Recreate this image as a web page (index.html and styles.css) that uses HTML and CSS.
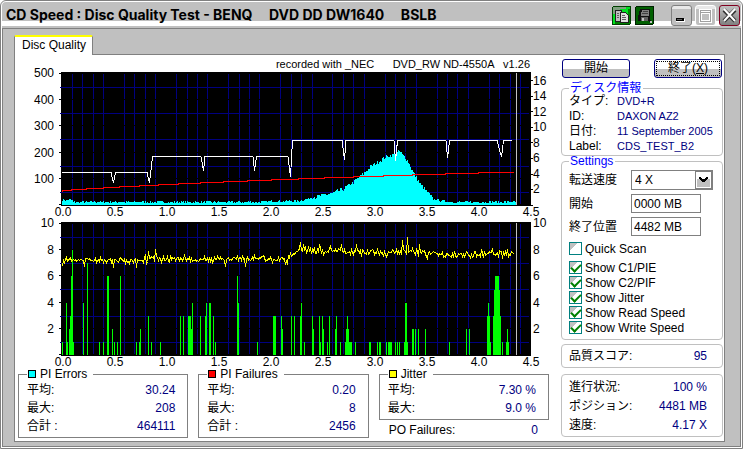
FILE: index.html
```
<!DOCTYPE html>
<html lang="ja">
<head>
    <meta charset="UTF-8">
    <meta name="viewport" content="width=device-width, initial-scale=1.0">
    <title>CD Speed : Disc Quality Test</title>
    <link rel="stylesheet" href="styles.css">
</head>
<body>
    <div class="window">
        <header class="titlebar">
            <h1>CD Speed : Disc Quality Test - BENQ     DVD DD DW1640     BSLB</h1>
            <div class="title-buttons">
                <button type="button" class="tool" aria-label="Copy">
                    <svg viewBox="0 0 19 19" shape-rendering="crispEdges">
                        <rect width="19" height="19" rx="2" fill="#004000"/>
                        <rect x="1" y="1" width="17" height="17" fill="#00e020"/>
                        <path d="M1 1h13v2H8v2H5v3H1z" fill="#80a080"/>
                        <path d="M16 3h2v15H3v-2h13z" fill="#008000"/>
                        <path d="M3 4h6v11H3z" fill="#c0c0c0" stroke="#202020"/>
                        <path d="M8 6h5l3 3v7H8z" fill="#e0e0e0" stroke="#202020"/>
                        <path d="M5 7h2M5 9h2M5 11h2M10 9h3M10 11h4M10 13h4" stroke="#606060"/>
                    </svg>
                </button>
                <button type="button" class="tool" aria-label="Save">
                    <svg viewBox="0 0 19 19" shape-rendering="crispEdges">
                        <rect width="19" height="19" rx="2" fill="#002000"/>
                        <rect x="1" y="1" width="17" height="17" fill="#006000"/>
                        <path d="M5 3h10v11h1v2h-2v-1H3V9h1V5h1z" fill="#101010"/>
                        <path d="M7 4h7v6H6V6h1z" fill="#808080"/>
                        <path d="M8 5h5v1H8zM7 7h6v1H7z" fill="#404040"/>
                        <path d="M6 11h7v4H6z" fill="#606060"/>
                        <path d="M7 12h2v3H7z" fill="#c0c0c0"/>
                        <path d="M15 15h2v2h-2z" fill="#c0c0c0"/>
                    </svg>
                </button>
                <button type="button" class="win min" aria-label="Minimize">
                    <svg viewBox="0 0 19 19" shape-rendering="crispEdges">
                        <path d="M4 12h8v3H4z" fill="#000"/>
                        <path d="M5 13h5v1H5z" fill="#606060"/>
                        <path d="M4 15.5h8.500v-3" fill="none" stroke="#fff"/>
                    </svg>
                </button>
                <button type="button" class="win max" aria-label="Maximize" disabled>
                    <svg viewBox="0 0 19 19" shape-rendering="crispEdges">
                        <path d="M4 4h10v11H4zM4 6h10" fill="none" stroke="#fff" stroke-width="3"/>
                        <path d="M4 4h10v11H4zM4 6h10" fill="none" stroke="#a0a0a0"/>
                    </svg>
                </button>
                <button type="button" class="win close" aria-label="Close">
                    <svg viewBox="0 0 19 19">
                        <path d="M4 4l11 11M15 4L4 15" stroke="#303030" stroke-width="4"/>
                        <path d="M4 3l11 12M15 3L4 15" stroke="#fff" stroke-width="2"/>
                    </svg>
                </button>
            </div>
        </header>

        <main class="content">
            <a class="tab" href="#quality">Disc Quality</a>
            <div class="panel" id="quality">
                <section class="results">
                    <p class="recorded">recorded with _NEC      DVD_RW ND-4550A   v1.26</p>

                    <div class="chart">
                        <div class="axis left"><span>500</span><span>400</span><span>300</span><span>200</span><span>100</span></div>
                        <svg class="plot" id="errorsPlot" viewBox="0 0 470 134" preserveAspectRatio="none"></svg>
                        <div class="axis right speed"><span>16</span><span>14</span><span>12</span><span>10</span><span>8</span><span>6</span><span>4</span><span>2</span></div>
                        <div class="axis bottom"><span>0.0</span><span>0.5</span><span>1.0</span><span>1.5</span><span>2.0</span><span>2.5</span><span>3.0</span><span>3.5</span><span>4.0</span><span>4.5</span></div>
                    </div>

                    <div class="chart">
                        <div class="axis left"><span>10</span><span>8</span><span>6</span><span>4</span><span>2</span></div>
                        <svg class="plot" id="jitterPlot" viewBox="0 0 470 134" preserveAspectRatio="none"></svg>
                        <div class="axis right"><span>10</span><span>8</span><span>6</span><span>4</span><span>2</span></div>
                        <div class="axis bottom"><span>0.0</span><span>0.5</span><span>1.0</span><span>1.5</span><span>2.0</span><span>2.5</span><span>3.0</span><span>3.5</span><span>4.0</span><span>4.5</span></div>
                    </div>

                    <div class="stats">
                        <fieldset class="stat">
                            <legend><i class="swatch cyan"></i>PI Errors</legend>
                            <dl>
                                <div><dt>平均:</dt><dd>30.24</dd></div>
                                <div><dt>最大:</dt><dd>208</dd></div>
                                <div><dt>合計 :</dt><dd>464111</dd></div>
                            </dl>
                        </fieldset>
                        <fieldset class="stat">
                            <legend><i class="swatch red"></i>PI Failures</legend>
                            <dl>
                                <div><dt>平均:</dt><dd>0.20</dd></div>
                                <div><dt>最大:</dt><dd>8</dd></div>
                                <div><dt>合計 :</dt><dd>2456</dd></div>
                            </dl>
                        </fieldset>
                        <div>
                            <fieldset class="stat">
                                <legend><i class="swatch yellow"></i>Jitter</legend>
                                <dl>
                                    <div><dt>平均:</dt><dd>7.30 %</dd></div>
                                    <div><dt>最大:</dt><dd>9.0 %</dd></div>
                                </dl>
                            </fieldset>
                            <dl class="po">
                                <div><dt>PO Failures:</dt><dd>0</dd></div>
                            </dl>
                        </div>
                    </div>
                </section>

                <aside class="side">
                    <div class="actions">
                        <button type="button">開始</button>
                        <button type="button" class="focused">終了(<u>X</u>)</button>
                    </div>

                    <fieldset class="group">
                        <legend>ディスク情報</legend>
                        <dl class="info">
                            <div><dt>タイプ:</dt><dd>DVD+R</dd></div>
                            <div><dt>ID:</dt><dd>DAXON AZ2</dd></div>
                            <div><dt>日付:</dt><dd>11 September 2005</dd></div>
                            <div><dt>Label:</dt><dd>CDS_TEST_B2</dd></div>
                        </dl>
                    </fieldset>

                    <fieldset class="group settings">
                        <legend>Settings</legend>
                        <div class="field">
                            <label for="speed">転送速度</label>
                            <span class="select">
                                <select id="speed"><option>4 X</option><option>8 X</option></select>
                                <svg viewBox="0 0 17 18" shape-rendering="crispEdges">
                                    <path d="M.5 .5h16v17H.5z" fill="#fff" stroke="#808080"/>
                                    <path d="M2 8h13v8H2z" fill="#c0c0c0"/>
                                    <path d="M4 6h2v1h1v1h3V7h1V6h2v2h-1v1h-1v1h-1v1H7v-1H6V9H5V8H4z" fill="#000"/>
                                </svg>
                            </span>
                        </div>
                        <div class="field">
                            <label for="start">開始</label>
                            <input type="text" id="start" value="0000 MB">
                        </div>
                        <div class="field">
                            <label for="end">終了位置</label>
                            <input type="text" id="end" value="4482 MB">
                        </div>
                        <div class="checks">
                            <label class="quick"><input type="checkbox">Quick Scan</label>
                            <label><input type="checkbox" checked>Show C1/PIE</label>
                            <label><input type="checkbox" checked>Show C2/PIF</label>
                            <label><input type="checkbox" checked>Show Jitter</label>
                            <label><input type="checkbox" checked>Show Read Speed</label>
                            <label><input type="checkbox" checked>Show Write Speed</label>
                        </div>
                    </fieldset>

                    <dl class="group score">
                        <div><dt>品質スコア:</dt><dd>95</dd></div>
                    </dl>

                    <dl class="group progress">
                        <div><dt>進行状況:</dt><dd>100 %</dd></div>
                        <div><dt>ポジション:</dt><dd>4481 MB</dd></div>
                        <div><dt>速度:</dt><dd>4.17 X</dd></div>
                    </dl>
                </aside>
            </div>
        </main>
    </div>

    <script src="charts.js"></script>
</body>
</html>
```

FILE: styles.css
```
* {
    box-sizing: border-box;
}
body {
    margin: 0;
    background: #fff;
    color: #000;
    font: 12px/14px "Liberation Sans", "Noto Sans CJK JP", sans-serif;
}
button, input, select {
    font: inherit;
    color: inherit;
}
dl, dd, p, h1 {
    margin: 0;
}
dl > div {
    display: flex;
    justify-content: space-between;
}
dd {
    color: #000080;
}
.window {
    display: flex;
    flex-direction: column;
    min-height: 100vh;
    border: 1px solid #808080;
    border-radius: 6px 6px 0 0;
    padding: 1px;
}

/* title bar */
.titlebar {
    display: flex;
    justify-content: space-between;
    height: 26px;
    padding: 3px 1px 0 4px;
    border-radius: 4px 4px 0 0;
    background: linear-gradient(#c0c0c0 19px, #fff 19px, #fff 24px, #c0c0c0 24px);
}
.titlebar h1 {
    font: bold 14px/20px Inter, "Liberation Sans", sans-serif;
    white-space: pre;
}
.title-buttons {
    display: flex;
    gap: 3px;
}
.title-buttons button {
    padding: 0;
    border: 0;
    background: none;
}
.title-buttons svg {
    display: block;
    width: 19px;
    height: 19px;
}
.title-buttons .tool {
    width: 20px;
    height: 20px;
}
.title-buttons .win {
    width: 21px;
    height: 21px;
    border: 1px solid #808080;
    border-radius: 3px;
    background: linear-gradient(#e8e8e8 3px, #c0c0c0 3px);
}
.title-buttons .min {
    margin-left: 13px;
}
.title-buttons .max {
    border-color: #fff;
}
.title-buttons .close {
    border-color: #800020;
    background: linear-gradient(#c0c0c0, #808080);
}

/* tab and panel */
.content {
    flex: 1;
    padding: 6px 15px 4px 11px;
    border: 1px solid #808080;
    background: #c0c0c0;
}
.tab {
    position: relative;
    display: block;
    width: max-content;
    margin-bottom: -1px;
    padding: 1px 6px 3px 7px;
    border: 1px solid #808080;
    border-top: 2px solid #ff0;
    border-bottom: 0;
    border-radius: 2px 2px 0 0;
    background: #fff;
    color: #000;
    text-decoration: none;
}
.panel {
    display: flex;
    gap: 5px;
    border: 1px solid #808080;
    padding: 0 1px 3px 0;
    background: #fff;
}
.results {
    flex: 1;
}
.recorded {
    height: 17px;
    padding: 2px 26px 0 0;
    font-size: 11px;
    text-align: right;
    white-space: pre;
}

/* charts */
.chart {
    display: grid;
    grid-template-columns: 46px 1fr 25px;
    grid-template-rows: 134px 16px;
}
.plot {
    width: 100%;
    height: 100%;
    overflow: visible;
    background: #000;
    shape-rendering: crispEdges;
}
.axis {
    display: flex;
    justify-content: space-between;
}
.axis.left, .axis.right {
    flex-direction: column;
    margin: -6px 0 20px;
}
.axis.left {
    padding-right: 7px;
    text-align: right;
}
.axis.right {
    padding-left: 2px;
}
.axis.speed {
    margin: 2px 0 10px;
}
.axis.bottom {
    grid-column: 2;
    margin: 0 -10px 0 -8px;
    line-height: 12px;
}
.axis.bottom span {
    width: 20px;
    text-align: center;
}

/* totals under the charts */
.stats {
    display: grid;
    grid-template-columns: repeat(3, 1fr);
    gap: 10px;
    margin: -4px 7px 0 3px;
}
.stat {
    margin: 0;
    padding: 1px 12px 2px 8px;
    border: 1px solid #808080;
}
.stat legend {
    padding: 0 6px 0 1px;
    line-height: 12px;
}
.stat dl > div {
    line-height: 18px;
}
.swatch {
    display: inline-block;
    width: 8px;
    height: 8px;
    margin-right: 4px;
    border: 1px solid #000;
}
.cyan {
    background: #0ff;
}
.red {
    background: #f00;
}
.yellow {
    background: #ff0;
}
.po {
    padding: 3px 11px 0 10px;
}

/* right side */
.side {
    width: 162px;
    padding-top: 4px;
}
.actions {
    display: flex;
    justify-content: space-between;
    padding: 0 1px;
}
.actions button {
    width: 68px;
    height: 19px;
    padding: 0;
    border: 1px solid #000080;
    border-radius: 3px;
    background: linear-gradient(#fff 9px, #c0c0c0 9px);
    line-height: 15px;
}
.actions .focused {
    outline: 1px dotted #000;
    outline-offset: -3px;
}
.group {
    margin: 0;
    padding: 0 15px 0 7px;
    border: 1px solid #c0c0c0;
    border-radius: 4px;
}
fieldset.group {
    min-width: 0;
    margin-top: 4px;
}
.group legend {
    padding: 0 2px 0 1px;
    color: #00f;
    line-height: 12px;
}
.info {
    margin: 0 -12px 1px 0;
}
.info > div {
    justify-content: flex-start;
    line-height: 15px;
}
.info dt {
    width: 48px;
}
.info dd {
    font-size: 11px;
    white-space: nowrap;
}
fieldset.settings {
    margin-top: -1px;
    padding: 3px 9px 4px 7px;
}
.field {
    display: grid;
    grid-template-columns: 62px 1fr;
    align-items: center;
    margin-bottom: 4px;
}
.field input {
    width: 70px;
    height: 19px;
    padding: 0 2px;
    border: 1px solid #808080;
    background: #fff;
}
.select {
    position: relative;
}
.select select {
    display: block;
    width: 100%;
    height: 20px;
    padding: 0 3px;
    border: 1px solid #808080;
    border-radius: 0;
    background: #fff;
    appearance: none;
}
.select svg {
    position: absolute;
    top: 1px;
    right: 1px;
    width: 17px;
    height: 18px;
    pointer-events: none;
}
.checks {
    padding-top: 1px;
}
.checks label {
    display: flex;
    align-items: center;
    gap: 3px;
    height: 15px;
}
.checks .quick {
    margin-bottom: 4px;
}
.checks input {
    display: grid;
    place-items: center;
    width: 13px;
    height: 13px;
    margin: 0;
    border: 1px solid #008080;
    background: linear-gradient(135deg, #c0c0c0 35%, #fff 35%);
    appearance: none;
}
.checks input:checked::after {
    content: "";
    width: 8px;
    height: 4px;
    margin-bottom: 2px;
    border: solid #008000;
    border-width: 0 0 2px 2px;
    transform: rotate(-45deg);
}
.score {
    margin-top: 4px;
    padding-top: 4px;
    padding-bottom: 4px;
}
.progress {
    margin-top: 6px;
    padding-top: 3px;
    padding-bottom: 1px;
}
.progress > div {
    line-height: 19px;
}
```

FILE: charts.js
```
const SVG = 'http://www.w3.org/2000/svg';
const STEP = 10.42;

function draw(svg, d, color, filled) {
    const path = document.createElementNS(SVG, 'path');
    path.setAttribute('d', d);
    path.setAttribute('fill', filled ? color : 'none');
    if (!filled) path.setAttribute('stroke', color);
    svg.appendChild(path);
}

// small repeatable noise, -1 to 1
let seed = 7;
function noise() {
    seed = (seed * 16807) % 2147483647;
    return seed / 1073741823 - 1;
}

// value between the [x, y] points of a list
function between(points, x) {
    for (let i = 1; i < points.length; i++) {
        const [x0, y0] = points[i - 1];
        const [x1, y1] = points[i];
        if (x <= x1) return y0 + (y1 - y0) * (x - x0) / (x1 - x0);
    }
    return points[points.length - 1][1];
}

function grid(svg) {
    let minor = '', major = '', ticks = '';
    for (let i = 1; i < 45; i++) {
        if (i % 5) minor += `M${Math.floor(1 + i * STEP) + 0.5} 2V133`;
    }
    for (let i = 0; i < 6; i++) {
        const y = Math.round(1 + i * 26.2) + 0.5;
        if (i < 5) minor += `M-1 ${y + 14}H468`;
        if (i) major += `M0 ${y}H470`;
        ticks += `M-2 ${y}H0`;
    }
    draw(svg, minor, '#000080');
    draw(svg, major, '#000');
    draw(svg, ticks, '#000');
}

const errors = document.getElementById('errorsPlot');
grid(errors);

let rightTicks = '';
for (let i = 0; i < 9; i++) rightTicks += `M470 ${Math.round(8 + i * 15.6) + 0.5}h2`;
draw(errors, rightTicks, '#000');

const pie = [[1, 5], [11, 5], [12, 3], [200, 3], [210, 4], [238, 4], [249, 7], [272, 12], [282, 16], [292, 23],
    [302, 31], [309, 38], [324, 48], [334, 51], [338, 54], [346, 45], [352, 32], [359, 21], [366, 13], [372, 6],
    [380, 4], [392, 3], [454, 3]];
let area = '';
for (let x = 1; x < 455; x++) {
    const base = between(pie, x);
    const h = Math.max(2, Math.round(base + noise() * (base > 8 ? 2 : 1)));
    area += `M${x} ${133 - h}h1V133h-1z`;
}
draw(errors, area, '#00ffff', true);

draw(errors, 'M1.5 120V118.5H10V117.5H25V116.5H42V115.5H58V114.5H78V113.5H97V112.5H117V111.5H139V110.5H162V109.5' +
    'H186V108.5H210V107.5H237V106.5H263V105.5H292V104.5H322V103.5H351V102.5H384V101.5H417V100.5H453', '#ff0000');
draw(errors, 'M1 100.5H50L52.5 111L54.5 100.5H86L88.5 111L91.5 84.5H140L142.5 99L144 84.5H192L193.5 99L195.5 84.5' +
    'H227L229.5 105L231.5 68.5H281L283.5 88L285 68.5H333L334.5 89L336.5 68.5H385L386.5 86L388.5 68.5' +
    'H436L440.5 85L442.5 68.5H451', '#fff');
draw(errors, 'M455.5 1V133', '#c0c0c0');

const jitter = document.getElementById('jitterPlot');
grid(jitter);

// PI failures: [x, count] or [x, count, width]
const pif = [[1, 1], [5, 4], [6, 1], [8, 2], [9, 3], [10, 6], [11, 8], [12, 1], [22, 4], [26, 7], [38, 1], [42, 1],
    [46, 6, 2], [51, 2], [53, 1], [56, 1], [59, 6], [75, 1], [78, 1], [79, 2], [87, 3], [90, 1], [99, 1], [119, 3],
    [122, 3], [127, 3, 3], [130, 2], [131, 4], [139, 3], [144, 3], [145, 4], [148, 4, 2], [152, 3], [154, 1],
    [176, 6], [177, 4], [196, 1], [212, 3, 3], [220, 3], [221, 2], [230, 3], [233, 3], [239, 3], [240, 4], [243, 1],
    [251, 3], [252, 2], [258, 3], [259, 1], [261, 3], [262, 2], [266, 1], [268, 3], [274, 2], [275, 3], [279, 1],
    [284, 1], [285, 2], [286, 3], [287, 2], [288, 1, 3], [294, 1], [308, 1, 2], [316, 1], [318, 1, 2], [325, 1],
    [327, 1, 4], [334, 1], [336, 1], [338, 1], [343, 1], [344, 4, 2], [346, 1], [351, 2, 2], [354, 2], [357, 2],
    [364, 2], [388, 1], [405, 2], [408, 2], [426, 3], [427, 4], [428, 3], [429, 1], [432, 3], [433, 5], [434, 6, 4],
    [438, 5], [439, 3], [441, 1], [445, 1], [446, 2], [447, 1]];
draw(jitter, pif.map(([x, n, w = 1]) => `M${x} ${Math.round(133 - n * 13.1)}h${w}V133h-${w}z`).join(''), '#00ff00', true);

const level = [[1, 37], [80, 38], [95, 36], [110, 36], [125, 37], [200, 36], [225, 37], [229, 33], [240, 28],
    [330, 30], [360, 29], [370, 32], [400, 32], [454, 31]];
// peaks that stand out of the noise
const peaks = { 1: 44, 23: 44, 52: 45, 75: 45, 87: 29, 94: 27, 164: 44, 184: 44, 224: 42, 239: 20, 242: 22,
    258: 22, 280: 22, 295: 22, 341: 18, 346: 15, 358: 22 };
let line = '';
for (let x = 1; x < 454; x++) {
    const wide = x > 225 || (x > 80 && x < 110);
    const y = peaks[x] || Math.round(between(level, x) + noise() * (wide ? 3 : 2) + noise() * noise() * 3);
    line += `${line ? 'L' : 'M'}${x + 0.5} ${y + 0.5}`;
}
draw(jitter, line, '#ffff00');
draw(jitter, 'M455.5 1V133', '#c0c0c0');
```
